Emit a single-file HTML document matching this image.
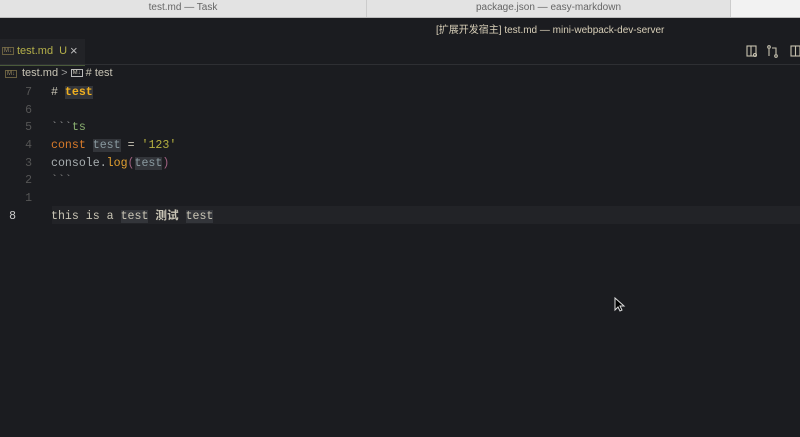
<!DOCTYPE html>
<html><head><meta charset="utf-8"><style>
body{margin:0;width:800px;height:437px;background:#1b1c20;overflow:hidden;position:relative;font-family:"Liberation Sans","Noto Sans CJK SC",sans-serif;}
.abs{position:absolute}
.tabt{top:0;height:17px;background:#e3e3e3;color:#666;font-size:10px;line-height:15px;text-align:center;border-right:1px solid #ccc;box-sizing:border-box}
.row{position:relative;height:17.7px;line-height:17.7px;font-family:"Liberation Mono","Noto Sans CJK SC",monospace;font-size:11.6px;white-space:pre;color:#c9c5b5}
.n{display:inline-block;width:32px;text-align:right;color:#555;font-size:11.5px;margin-right:19px}
.hl{background:#33353a}
</style></head><body>
<div class="abs tabt" style="left:0;width:367px">test.md — Task</div>
<div class="abs tabt" style="left:367px;width:364px">package.json — easy-markdown</div>
<div class="abs tabt" style="left:731px;width:69px;background:#f2f2f2;border:none"></div>
<div class="abs" style="top:17px;left:0;width:800px;height:1px;background:#bbb"></div>
<div class="abs" style="top:21px;left:436px;color:#d8cfb8;font-size:10px">[扩展开发宿主] test.md — mini-webpack-dev-server</div>
<div class="abs" style="top:39px;left:0;width:85px;height:26px;background:#222327;border-bottom:1px solid #4a5a3a"></div>
<div class="abs" style="top:64px;left:0;width:800px;height:1px;background:#2e2f33"></div>
<div class="abs" style="top:47px;left:2px;color:#9a8a60;font-size:6px;border:1px solid #6a6040;padding:0 1px">M↓</div>
<div class="abs" style="top:45px;left:17px;color:#b5b04a;font-size:11px">test.md&nbsp; U</div>
<div class="abs" style="top:43px;left:70px;color:#bbb;font-size:13px">×</div>
<svg class="abs" style="left:744px;top:44px" width="56" height="16" fill="none" stroke="#c7c2b0" stroke-width="1.1">
<rect x="3" y="2" width="9" height="10"/><line x1="7" y1="2" x2="7" y2="12"/><circle cx="11" cy="11" r="1.5"/>
<circle cx="25" cy="3" r="1.3"/><circle cx="32" cy="12" r="1.3"/><path d="M25 5v7M32 10V4h-4"/>
<rect x="47" y="2" width="9" height="10"/><line x1="51.5" y1="2" x2="51.5" y2="12"/>
</svg>
<div class="abs" style="top:70px;left:5px;color:#9a8a60;font-size:6px;border:1px solid #6a6040;padding:0 1px">M↓</div>
<div class="abs" style="top:67px;left:22px;color:#c8c4b5;font-size:11px">test.md <span style="color:#999">&gt;</span> <span style="font-size:6px;border:1px solid #bbb;padding:0 1px;vertical-align:2px">M↓</span> # test</div>
<div class="abs" style="top:206px;left:52px;width:748px;height:18px;background:#222327"></div>
<div class="abs" style="top:84px;left:0;width:800px">
<div class="row"><span class="n">7</span># <span class="hl" style="color:#f0b020;font-weight:bold">test</span></div>
<div class="row"><span class="n">6</span></div>
<div class="row"><span class="n">5</span><span style="color:#999">&#96;&#96;&#96;</span><span style="color:#8ab070">ts</span></div>
<div class="row"><span class="n">4</span><span style="color:#d87a2a">const</span> <span class="hl" style="color:#8a9aa0">test</span> = <span style="color:#b5b040">'123'</span></div>
<div class="row"><span class="n">3</span><span style="color:#a8aeb0">console.</span><span style="color:#e3a030">log</span><span style="color:#a06080">(</span><span class="hl" style="color:#8a9aa0">test</span><span style="color:#a06080">)</span></div>
<div class="row"><span class="n">2</span><span style="color:#888">&#96;&#96;&#96;</span></div>
<div class="row"><span class="n">1</span></div>
<div class="row"><span class="n" style="width:16px;margin-right:35px;color:#ccc">8</span>this is a <span class="hl">test</span> <b>测试</b> <span class="hl">test</span></div>
</div>
<svg class="abs" style="left:614px;top:297px" width="12" height="16"><path d="M1 1v12l3-3 2 4 2-1-2-4h4z" fill="#000" stroke="#ddd" stroke-width="1"/></svg>
</body></html>
